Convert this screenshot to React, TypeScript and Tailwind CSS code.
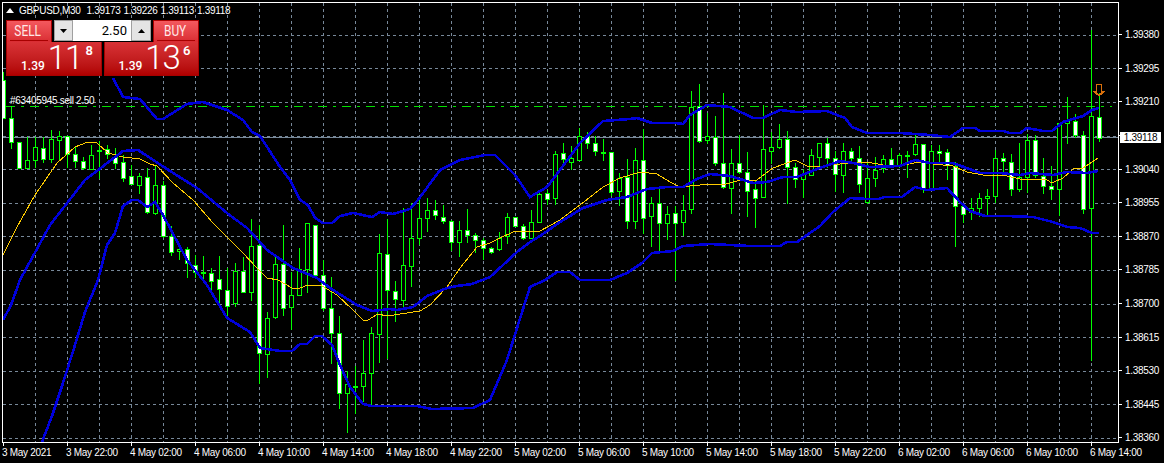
type Candle = [number, number, number, number, boolean];

// [high, body top, body bottom, low, filled], all in page pixels. First candle sits at x=3, then every 8px from x=11
const candles: Candle[] = [
  [72, 80, 118, 118, true],
  [106, 118, 142, 148, true], [142, 142, 168, 168, true], [137, 160, 168, 168, false], [137, 147, 160, 167, false],
  [137, 148, 159, 162, true], [130, 139, 159, 162, false], [131, 136, 140, 160, false], [136, 136, 154, 167, true],
  [147, 154, 161, 167, true], [157, 161, 168, 169, true], [145, 155, 169, 169, false], [141, 150, 150, 178, false],
  [145, 149, 154, 158, true], [148, 157, 163, 168, true], [155, 162, 178, 181, true], [165, 176, 184, 184, true],
  [173, 176, 185, 193, false], [168, 177, 212, 213, true], [165, 185, 213, 214, false], [181, 185, 236, 237, true],
  [226, 236, 252, 255, true], [246, 249, 251, 259, false], [247, 249, 263, 277, true], [255, 265, 272, 277, true],
  [256, 272, 272, 278, false], [268, 273, 281, 293, true], [256, 279, 289, 302, true], [268, 290, 306, 316, true],
  [263, 271, 303, 306, false], [257, 271, 292, 292, true], [219, 246, 292, 300, false], [225, 245, 353, 383, true],
  [312, 318, 354, 377, false], [257, 264, 317, 318, false], [225, 264, 308, 315, true], [272, 295, 307, 329, false],
  [248, 269, 295, 295, false], [223, 223, 269, 292, false], [225, 225, 275, 275, true], [260, 275, 308, 310, true],
  [277, 308, 333, 363, true], [316, 333, 393, 408, true], [371, 384, 393, 432, false], [366, 386, 386, 413, false],
  [340, 373, 386, 401, false], [327, 333, 373, 404, false], [234, 253, 334, 362, false], [219, 254, 290, 358, true],
  [281, 291, 299, 321, true], [208, 265, 300, 307, false], [203, 238, 266, 286, false], [199, 218, 238, 244, false],
  [198, 210, 218, 231, false], [200, 210, 215, 219, true], [205, 217, 221, 223, true], [220, 221, 242, 250, true],
  [221, 230, 242, 256, false], [209, 230, 235, 242, true], [233, 235, 240, 252, true], [238, 240, 248, 259, true],
  [247, 248, 252, 253, true], [232, 238, 249, 250, false], [213, 217, 236, 243, false], [217, 217, 226, 226, true],
  [224, 226, 238, 239, true], [210, 222, 238, 238, false], [190, 194, 222, 222, false], [190, 193, 199, 204, true],
  [151, 154, 198, 204, false], [143, 153, 159, 162, true], [146, 158, 162, 169, false], [128, 136, 160, 160, false],
  [132, 136, 143, 148, true], [136, 143, 151, 155, true], [139, 152, 152, 160, false], [152, 152, 192, 195, true],
  [173, 178, 191, 205, false], [159, 177, 221, 228, true], [148, 160, 221, 228, false], [129, 160, 218, 233, true],
  [197, 203, 216, 246, false], [188, 203, 223, 252, true], [206, 214, 223, 239, false], [206, 213, 223, 280, true],
  [195, 210, 222, 235, false], [91, 107, 209, 213, false], [84, 106, 141, 142, true], [113, 136, 140, 143, false],
  [116, 137, 163, 165, true], [93, 163, 187, 188, true], [149, 163, 188, 213, false], [135, 163, 172, 173, true],
  [152, 172, 191, 216, true], [180, 189, 198, 227, true], [105, 149, 197, 197, false], [132, 147, 151, 163, false],
  [124, 139, 147, 148, false], [131, 139, 167, 203, true], [163, 167, 179, 187, true], [169, 174, 179, 197, false],
  [149, 155, 175, 175, false], [143, 143, 157, 167, false], [138, 143, 158, 167, true], [151, 158, 174, 191, true],
  [143, 151, 175, 192, false], [148, 151, 158, 160, true], [146, 158, 184, 192, true], [163, 178, 202, 203, false],
  [157, 170, 178, 186, false], [155, 159, 168, 172, false], [148, 159, 165, 165, true], [153, 155, 166, 167, false],
  [151, 155, 155, 177, false], [135, 144, 154, 155, false], [144, 144, 189, 192, true], [145, 151, 189, 190, false],
  [145, 151, 153, 162, true], [149, 152, 165, 179, true], [162, 166, 206, 246, true], [203, 206, 214, 222, true],
  [198, 208, 212, 219, false], [193, 198, 208, 216, false], [189, 196, 198, 214, false], [150, 158, 196, 202, false],
  [153, 158, 161, 173, true], [154, 162, 189, 195, true], [143, 177, 189, 191, false], [134, 140, 177, 192, false],
  [135, 140, 175, 177, true], [158, 176, 186, 193, true], [166, 186, 189, 199, true], [123, 123, 189, 215, false],
  [97, 121, 123, 143, false], [114, 121, 135, 137, true], [131, 135, 209, 213, true], [30, 116, 208, 360, false],
  [93, 117, 138, 141, true],
];

const upperBand = [
  [113, 78], [123, 97], [140, 99], [157, 119], [163, 119], [187, 104], [203, 102], [227, 110], [243, 120], [252, 132],
  [260, 136], [280, 167], [290, 180], [300, 200], [308, 205], [315, 218], [323, 223], [332, 223], [340, 216], [353, 213],
  [372, 217], [380, 212], [393, 214], [410, 209], [418, 200], [440, 170], [460, 160], [485, 155], [495, 155], [515, 175],
  [530, 197], [547, 187], [560, 170], [580, 143], [603, 121], [630, 119], [637, 118], [652, 123], [675, 123], [683, 124],
  [690, 115], [707, 105], [730, 107], [753, 118], [763, 118], [780, 110], [797, 112], [827, 111], [837, 115], [845, 118],
  [852, 127], [867, 133], [900, 133], [930, 135], [950, 137], [963, 128], [975, 128], [980, 131], [1003, 131], [1010, 133],
  [1020, 133], [1027, 128], [1043, 131], [1052, 131], [1063, 122], [1083, 116], [1092, 110], [1099, 108],
];

const middleBand = [
  [3, 320], [11, 305], [20, 280], [50, 225], [85, 180], [123, 151], [138, 150], [170, 171], [197, 188], [227, 213],
  [247, 228], [267, 250], [293, 268], [317, 278], [333, 290], [357, 305], [372, 311], [390, 309], [397, 310], [413, 307],
  [427, 296], [447, 288], [457, 286], [472, 284], [490, 277], [503, 265], [517, 252], [530, 242], [540, 236], [560, 222],
  [583, 208], [607, 200], [627, 197], [647, 189], [667, 187], [683, 187], [697, 179], [710, 174], [730, 176], [753, 183],
  [767, 182], [783, 177], [797, 177], [817, 169], [840, 161], [853, 163], [870, 167], [900, 166], [915, 160], [930, 163],
  [953, 163], [980, 173], [1000, 173], [1020, 175], [1030, 173], [1053, 175], [1067, 172], [1087, 173], [1098, 171],
];

const lowerBand = [
  [42, 442], [52, 416], [63, 383], [75, 345], [85, 312], [98, 280], [107, 245], [115, 233], [123, 206], [132, 200],
  [138, 200], [147, 207], [155, 202], [163, 215], [187, 260], [207, 285], [227, 318], [250, 332], [260, 348], [280, 351],
  [292, 351], [300, 344], [307, 344], [315, 336], [322, 336], [332, 345], [340, 365], [350, 387], [363, 404], [372, 406],
  [417, 406], [432, 409], [473, 408], [490, 400], [507, 360], [517, 328], [530, 287], [545, 280], [557, 272], [570, 272],
  [580, 280], [610, 280], [627, 273], [642, 263], [652, 253], [673, 251], [683, 246], [710, 244], [750, 246], [780, 246],
  [787, 242], [797, 242], [820, 226], [833, 212], [850, 198], [867, 199], [878, 199], [885, 197], [902, 197], [915, 187],
  [927, 190], [947, 188], [960, 202], [970, 211], [985, 216], [1007, 216], [1033, 217], [1053, 222], [1067, 227], [1080, 228],
  [1092, 233], [1099, 233],
];

const movingAverage = [
  [3, 255], [17, 227], [35, 195], [57, 163], [75, 147], [88, 142], [97, 143], [108, 153], [123, 157], [140, 159],
  [150, 164], [157, 166], [173, 183], [193, 200], [213, 223], [220, 230], [243, 253], [257, 268], [267, 278], [278, 280],
  [292, 288], [300, 288], [308, 285], [322, 286], [337, 295], [353, 310], [363, 320], [368, 320], [378, 314], [387, 316],
  [420, 311], [430, 305], [447, 287], [460, 268], [477, 247], [490, 243], [500, 238], [513, 232], [540, 231], [560, 220],
  [580, 205], [603, 187], [620, 178], [640, 172], [657, 174], [670, 182], [680, 187], [710, 184], [723, 185], [740, 180],
  [757, 180], [773, 168], [795, 160], [807, 166], [823, 166], [840, 164], [867, 162], [883, 165], [903, 165], [920, 162],
  [933, 164], [953, 166], [967, 172], [983, 175], [1007, 176], [1020, 179], [1047, 180], [1052, 183], [1063, 178], [1073, 169],
  [1083, 168], [1098, 158],
];

const gridRows = [35, 68, 102, 136, 169, 203, 236, 270, 304, 337, 371, 404, 438];
const gridCols = Array.from({ length: 35 }, (_, i) => 35 + i * 32);

const priceLabels = [
  '1.39380', '1.39295', '1.39210', '', '1.39040', '1.38955', '1.38870',
  '1.38785', '1.38700', '1.38615', '1.38530', '1.38445', '1.38360',
];

const timeLabels = [
  '3 May 2021', '3 May 22:00', '4 May 02:00', '4 May 06:00', '4 May 10:00', '4 May 14:00',
  '4 May 18:00', '4 May 22:00', '5 May 02:00', '5 May 06:00', '5 May 10:00', '5 May 14:00',
  '5 May 18:00', '5 May 22:00', '6 May 02:00', '6 May 06:00', '6 May 10:00', '6 May 14:00',
];

const GREEN = '#00ff00';
const BLUE = '#0000dc';
const GRID = '#778899';

function toPath(points: number[][]) {
  return points.map(([x, y], i) => `${i === 0 ? 'M' : 'L'}${x} ${y}`).join(' ');
}

function CandleMark({ candle, x }: { candle: Candle; x: number }) {
  const [high, top, bottom, low, filled] = candle;
  return (
    <g>
      <line x1={x + 0.5} x2={x + 0.5} y1={high} y2={low + 1} stroke={GREEN} />
      {top === bottom ? (
        <rect x={x - 2} y={top} width={5} height={2} fill={GREEN} />
      ) : (
        <rect
          x={x - 1.5}
          y={top + 0.5}
          width={4}
          height={bottom - top}
          fill={filled ? '#ffffff' : '#000000'}
          stroke={GREEN}
        />
      )}
    </g>
  );
}

function Chart() {
  return (
    <svg width={1115} height={439} viewBox="3 3 1115 439" className="block" shapeRendering="crispEdges">
      {gridRows.map(y => (
        <line key={y} x1={3} x2={1118} y1={y + 0.5} y2={y + 0.5} stroke={GRID} strokeDasharray="3 3" />
      ))}
      {gridCols.map(x => (
        <line key={x} x1={x + 0.5} x2={x + 0.5} y1={3} y2={442} stroke={GRID} strokeDasharray="3 3" />
      ))}
      <line x1={3} x2={1118} y1={137.5} y2={137.5} stroke={GRID} />
      <line x1={6} x2={1112} y1={106.5} y2={106.5} stroke="#00e000" strokeDasharray="9 6 3 6" />
      {candles.map((candle, i) => (
        <CandleMark key={i} candle={candle} x={3 + i * 8} />
      ))}
      <path d={toPath(movingAverage)} fill="none" stroke="#ffcc00" strokeWidth={1} />
      <path d={toPath(upperBand)} fill="none" stroke={BLUE} strokeWidth={2.6} />
      <path d={toPath(middleBand)} fill="none" stroke={BLUE} strokeWidth={2.6} />
      <path d={toPath(lowerBand)} fill="none" stroke={BLUE} strokeWidth={2.6} />
      <path d="M1096.5 84.5H1101.5V91.5H1104L1099 95.5L1094 91.5H1096.5Z" fill="none" stroke="#d9700c" strokeWidth={1.6} />
    </svg>
  );
}

function Triangle({ up }: { up?: boolean }) {
  return (
    <svg width={7} height={4} viewBox="0 0 7 4" className="block">
      <path d={up ? 'M3.5 0L7 4H0Z' : 'M0 0H7L3.5 4Z'} fill="#000000" />
    </svg>
  );
}

function Quote({ big, small }: { big: string; small: string }) {
  return (
    <div className="flex h-[34px] flex-1 items-start border border-t-0 border-[#a80000] bg-linear-to-b from-[#d93236] to-[#b00000] pl-[14px] text-white">
      <span className="mt-[17px] text-[12px] leading-[15px] font-medium">1.39</span>
      <span className="ml-[3px] mt-[-3px] text-[33px] leading-[38px] font-light tracking-[-1px]">{big}</span>
      <span className="ml-[3px] mt-[1px] text-[13px] leading-[16px] font-semibold">{small}</span>
    </div>
  );
}

function SideButton({ label }: { label: string }) {
  return (
    <div className="flex h-[22px] w-[46px] items-start justify-center border border-b-0 border-[#a80000] bg-linear-to-b from-[#f4585e] to-[#d92c32]">
      <span className="mt-[3px] w-[38px] border-b border-[#a80000] pb-[1px] pr-[2px] text-center text-[14px] leading-[15px] text-[#ffe8e8]">
        <span className="inline-block scale-x-[0.85]">{label}</span>
      </span>
    </div>
  );
}

function TradePanel() {
  return (
    <div className="absolute left-[3px] top-[17px] flex w-[193px] flex-col bg-black font-['Roboto',sans-serif] tracking-normal">
      <div className="flex h-[22px] justify-between">
        <SideButton label="SELL" />
        <div className="flex h-[21px] w-[97px] bg-[#e8e8e8]">
          <div className="flex w-[19px] items-center justify-center border border-[#a0a0a0] bg-[#e4e4e4]">
            <Triangle />
          </div>
          <div className="flex w-[58px] items-center justify-end bg-white pr-[4px] text-[13px] text-black">2.50</div>
          <div className="flex w-[20px] items-center justify-center border border-[#a0a0a0] bg-[#e4e4e4]">
            <Triangle up />
          </div>
        </div>
        <SideButton label="BUY" />
      </div>
      <div className="flex gap-[2px]">
        <Quote big="11" small="8" />
        <Quote big="13" small="6" />
      </div>
    </div>
  );
}

export default function App() {
  return (
    <div className="flex h-[463px] w-[1164px] flex-col overflow-hidden bg-black pl-[2px] pt-[2px] font-['Liberation_Sans',sans-serif] text-[10px] tracking-[-0.3px] text-white">
      <div className="flex h-[441px]">
        <div className="relative h-[441px] w-[1117px] border border-white">
          <Chart />
          <div className="absolute left-[3px] top-[1px] flex h-[13px] items-center">
            <span className="mr-[5px] h-0 w-0 border-x-[4px] border-b-[5px] border-x-transparent border-b-white" />
            <span className="mr-[6px]">GBPUSD,M30</span>
            <span className="flex gap-[3px]">
              <span>1.39173</span>
              <span>1.39226</span>
              <span>1.39113</span>
              <span>1.39118</span>
            </span>
          </div>
          <div className="absolute left-[7px] top-[91px] leading-[13px]">#63405945 sell 2.50</div>
          <TradePanel />
        </div>
        <div className="flex flex-1 flex-col pt-[16px]">
          {priceLabels.map((label, i) => (
            <div key={i} className="flex h-[33.6px] shrink-0 items-center">
              <span className="h-px w-[3px] bg-white" />
              {label ? (
                <span className="ml-[3px]">{label}</span>
              ) : (
                <span className="ml-[-2px] mt-[4px] flex h-[11px] w-[41px] items-center justify-center bg-white text-black">
                  1.39118
                </span>
              )}
            </div>
          ))}
        </div>
      </div>
      <div className="flex">
        {timeLabels.map((label, i) => (
          <div key={i} className="w-[64px] shrink-0">
            <div className="ml-px h-[3px] w-px bg-white" />
            <div className="mt-[1px] leading-[12px]">{label}</div>
          </div>
        ))}
      </div>
    </div>
  );
}
